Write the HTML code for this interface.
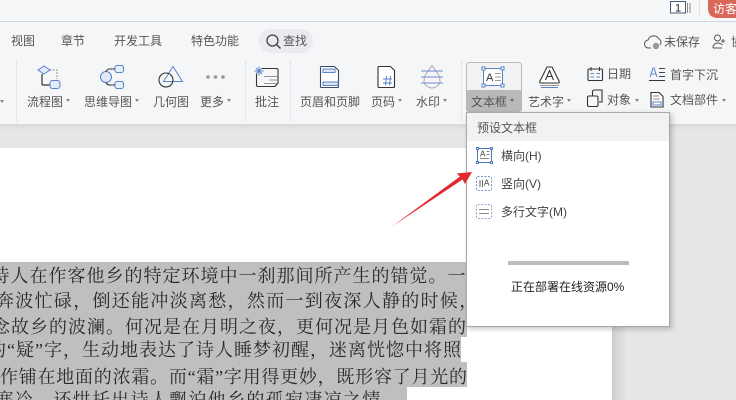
<!DOCTYPE html>
<html lang="zh-CN"><head><meta charset="utf-8">
<style>
html,body{margin:0;padding:0;width:736px;height:400px;overflow:hidden}
#w{width:736px;height:400px;position:relative;overflow:hidden;background:#e6e6e6;font-family:"Liberation Sans","Noto Sans CJK SC",sans-serif;font-size:12px;color:#555}
.a{position:absolute}
.t{position:absolute;white-space:nowrap;line-height:16px;height:16px}
.c{position:absolute;width:0;height:0;border-left:2.5px solid transparent;border-right:2.5px solid transparent;border-top:3px solid #888}
.sel{position:absolute;background:#bfbfbf;left:0}
.l{position:absolute;left:0;height:25px;line-height:25px;font-family:"Liberation Serif","Noto Serif CJK SC",serif;font-size:18px;color:#2a2a2a;white-space:nowrap}
.j{text-align:justify;text-align-last:justify}
svg{position:absolute;left:0;top:0}
svg text{font-family:"Liberation Sans",sans-serif}
</style></head><body><div id="w">
<div class="a" style="left:0;top:0;width:736px;height:21px;background:#f6f7f9"></div>
<div class="a" style="left:0;top:21px;width:736px;height:1px;background:#d2d5e2"></div>
<div class="a" style="left:0;top:22px;width:736px;height:102px;background:#f5f6f7"></div>
<div class="a" style="left:0;top:124px;width:736px;height:6px;background:linear-gradient(#d8d8d8,#e6e6e6)"></div>

<div class="a" style="left:0;top:148px;width:612px;height:252px;background:#fff"></div>
<div class="a" style="left:612px;top:148px;width:15px;height:252px;background:linear-gradient(90deg,#cfcfcf,#e6e6e6)"></div>

<div class="sel" style="top:262px;width:466px;height:25px"></div>
<div class="sel" style="top:287px;width:466px;height:25px"></div>
<div class="sel" style="top:312px;width:467px;height:25px"></div>
<div class="sel" style="top:337px;width:461px;height:25px"></div>
<div class="sel" style="top:362px;width:467px;height:25px"></div>
<div class="sel" style="top:387px;width:407px;height:13px"></div>
<div class="l" style="top:264px;left:-8.500px;letter-spacing:1px">诗人在作客他乡的特定环境中一刹那间所产生的错觉。一</div>
<div class="l" style="top:289px;left:-4px;letter-spacing:1.300px">奔波忙碌，倒还能冲淡离愁，然而一到夜深人静的时候，</div>
<div class="l" style="top:315px;left:-8px;letter-spacing:1px">念故乡的波澜。何况是在月明之夜，更何况是月色如霜的</div>
<div class="l j" style="top:338px;left:-12px;width:473px">的“疑”字，生动地表达了诗人睡梦初醒，迷离恍惚中将照</div>
<div class="l j" style="top:365px;left:0;width:467px">作铺在地面的浓霜。而“霜”字用得更妙，既形容了月光的</div>
<div class="l" style="top:388px;left:-4.500px;letter-spacing:1.300px">寒冷，还烘托出诗人飘泊他乡的孤寂凄凉之情。</div>

<svg width="736" height="400" style="z-index:1" fill="none">
<rect x="670.500" y="1.500" width="15" height="11.500" stroke="#4a5a78" fill="#fff"/>
<text x="678" y="11.500" font-size="11" fill="#222" text-anchor="middle">1</text>
<path d="M687.500 3v10M690 3v10" stroke="#888"/>
<path d="M699.500 0v17" stroke="#e2e2e2"/>
<path d="M708 0h28v18h-18q-10 0-10-10z" fill="#d9675a"/>
<!-- cloud -->
<path d="M651 48h-2a4 4 0 0 1-1-8 6 6 0 0 1 11-1 4 4 0 0 1 1 6" stroke="#555"/>
<circle cx="656" cy="46" r="3.200" fill="#9a9a9a"/>
<!-- person -->
<circle cx="717.500" cy="38" r="3" stroke="#555"/>
<path d="M713 48c0-3 2-5 4.500-5s4 1 5 2M713 48h9M721 41h4M723 39v4" stroke="#555"/>
<!-- search -->
<rect x="259" y="29" width="54" height="24" rx="12" fill="#e9ebee"/>
<circle cx="272.500" cy="40.500" r="5.500" stroke="#444" stroke-width="1.300"/>
<path d="M276.500 44.500l4 4" stroke="#444" stroke-width="1.500"/>
<!-- separators -->
<path d="M16.500 60v62M245.500 60v62M290.500 60v62M461.500 60v62" stroke="#e4e5e8"/>
<!-- flowchart -->
<path d="M38 70l6-4 6 4-6 4z" stroke="#5b83c9" fill="#e3ebf8"/>
<path d="M50 70h7v9" stroke="#999" stroke-dasharray="2 1"/>
<path d="M42 74v10q0 1 1 1h7" stroke="#333" stroke-width="1.200"/>
<rect x="50" y="80.500" width="10" height="8" rx="2.500" stroke="#5b83c9" fill="#e3ebf8"/>
<!-- mind -->
<circle cx="106" cy="77" r="5.500" stroke="#5b83c9" fill="#dfe8f6"/>
<rect x="115" y="65.500" width="8.500" height="7" rx="2" stroke="#5b83c9" fill="#e9eff9"/>
<rect x="115" y="81.500" width="8.500" height="7" rx="2" stroke="#5b83c9" fill="#e9eff9"/>
<path d="M106 71.500q1-2.500 4-2.500h5M106 82.500q1 2.500 4 2.500h5" stroke="#333" stroke-width="1.100"/>
<!-- geometry -->
<path d="M173 66.500l9.500 15h-19z" stroke="#5b83c9"/>
<circle cx="166" cy="80" r="7" stroke="#333" stroke-width="1.100"/>
<!-- more -->
<circle cx="208" cy="77" r="1.800" fill="#999"/><circle cx="215.500" cy="77" r="1.800" fill="#999"/><circle cx="223" cy="77" r="1.800" fill="#999"/>
<!-- comment -->
<path d="M262 68.500h14.500q1.500 0 1.500 1.500V83l-3 3.500H258q-1.500 0-1.500-1.500V73" stroke="#333" stroke-width="1.100"/>
<path d="M264 76.500h13M269 80h8M264 83.500h13" stroke="#999"/>
<path d="M259 66.500v9M254.500 71h9M256 68l6 6M262 68l-6 6" stroke="#5b83c9"/>
<!-- header footer -->
<path d="M321.500 66.500h13l4 4v16a1 1 0 0 1-1 1h-16a1 1 0 0 1-1-1v-19a1 1 0 0 1 1-1z" stroke="#3c4a63" stroke-width="1.100" fill="#fff"/>
<rect x="323" y="69" width="12" height="3.500" stroke="#5b83c9" fill="#dbe5f5"/>
<rect x="323" y="82" width="15" height="3.500" stroke="#5b83c9" fill="#dbe5f5"/>
<!-- page no -->
<path d="M379 66.500h11.500l4 4v16a1 1 0 0 1-1 1H379a1 1 0 0 1-1-1v-19a1 1 0 0 1 1-1z" stroke="#333" stroke-width="1.100" fill="#fff"/>
<path d="M383 79h9M383 83h9M386.500 76l-1 9.500M390.500 76l-1 9.500" stroke="#5b83c9"/>
<!-- watermark -->
<path d="M432 65.500c-3 5-8 9-8 15a8 7.500 0 0 0 16 0c0-6-5-10-8-15z" stroke="#aaa"/>
<path d="M421 71h22M421 77h22M421 83h22" stroke="#6c8fc8" stroke-width="1.100"/>
<!-- text box button -->
<rect x="466.500" y="62.500" width="55" height="49" rx="3" fill="#f2f2f2" stroke="#b9b9b9"/>
<path d="M466 90h56v19q0 3-3 3h-50q-3 0-3-3z" fill="#b9b9b9"/>
<rect x="483.500" y="68.500" width="19" height="17" stroke="#5b83c9" fill="#fff"/>
<g fill="#fff" stroke="#5b83c9"><rect x="482" y="67" width="3" height="3"/><rect x="501" y="67" width="3" height="3"/><rect x="482" y="84" width="3" height="3"/><rect x="501" y="84" width="3" height="3"/></g>
<text x="486" y="81" font-size="11" fill="#333">A</text>
<path d="M495 73.500h6M495 77h6M495 80.500h6" stroke="#999"/>
<!-- art -->
<path d="M547 67h5l7 14q1 2-1 2h-17q-2 0-1-2z" stroke="#333" stroke-width="1.100" fill="#fff"/>
<path d="M545.500 80l4-9.500 4 9.500M547 76.500h5" stroke="#333" stroke-width="1.100"/>
<path d="M540 85.500h19" stroke="#999"/><path d="M541 87.500h17" stroke="#5b83c9"/>
<!-- date -->
<rect x="588" y="69" width="14.500" height="11.500" rx="1" stroke="#333" stroke-width="1.100"/>
<path d="M591 67v4M599.500 67v4" stroke="#333"/>
<path d="M590.500 73.500h3.500M596.500 73.500h3.500M590.500 77h3.500M596.500 77h3.500" stroke="#5b83c9"/>
<!-- object -->
<path d="M592.500 96v-4q0-2 2-2h7.500v12h-3" stroke="#333" stroke-width="1.100"/>
<rect x="587.500" y="96" width="10.500" height="10.500" rx="1.500" stroke="#333" stroke-width="1.100" fill="#f5f6f7"/>
<!-- drop cap -->
<path d="M650 77l3-9h1l3 9M651 74h5" stroke="#5b83c9"/>
<path d="M659 68.500h6M659 72.500h6M659 76.500h6" stroke="#444"/><path d="M649 80.500h16" stroke="#333"/>
<!-- parts -->
<path d="M651 92.500h8l4 4v10.500h-12z" stroke="#333" stroke-width="1.100" fill="#fff"/>
<path d="M653 96h6M653 99h7" stroke="#888"/><rect x="653" y="102" width="8" height="3" stroke="#5b83c9"/>
</svg>

<div class="t" style="left:708px;top:1px;width:34px;text-align:center;color:#fff;z-index:2;font-size:12px">访客</div>

<div class="t" style="left:11px;top:33px">视图</div>
<div class="t" style="left:61px;top:33px">章节</div>
<div class="t" style="left:114px;top:33px">开发工具</div>
<div class="t" style="left:191px;top:33px">特色功能</div>
<div class="t" style="left:283px;top:33px;z-index:2">查找</div>
<div class="t" style="left:664px;top:34px">未保存</div>
<div class="t" style="left:731px;top:34px">协</div>

<div class="c" style="left:0;top:100px"></div>
<div class="t" style="left:27px;top:94px">流程图</div><div class="c" style="left:66px;top:99px"></div>
<div class="t" style="left:84px;top:94px">思维导图</div><div class="c" style="left:135px;top:99px"></div>
<div class="t" style="left:153px;top:94px">几何图</div>
<div class="t" style="left:200px;top:94px">更多</div><div class="c" style="left:227px;top:99px"></div>
<div class="t" style="left:255px;top:94px">批注</div>
<div class="t" style="left:300px;top:94px">页眉和页脚</div>
<div class="t" style="left:371px;top:94px">页码</div><div class="c" style="left:398px;top:99px"></div>
<div class="t" style="left:416px;top:94px">水印</div><div class="c" style="left:443px;top:99px"></div>
<div class="t" style="left:471px;top:94px;z-index:2">文本框</div><div class="c" style="left:510px;top:99px;z-index:2;border-top-color:#666"></div>
<div class="t" style="left:528px;top:94px">艺术字</div><div class="c" style="left:567px;top:99px"></div>
<div class="t" style="left:607px;top:66px">日期</div>
<div class="t" style="left:670px;top:67px">首字下沉</div>
<div class="t" style="left:607px;top:92px">对象</div><div class="c" style="left:635px;top:99px"></div>
<div class="t" style="left:670px;top:92px">文档部件</div><div class="c" style="left:722px;top:99px"></div>

<!-- dropdown -->
<div class="a" style="left:466px;top:112px;width:202px;height:213px;background:#fff;border:1px solid #a9a9a9;box-shadow:2px 2px 5px rgba(0,0,0,.22);z-index:3">
 <div class="a" style="left:0;top:0;width:202px;height:28px;background:#f1f2f4"></div>
 <div class="t" style="left:10px;top:7px;color:#555">预设文本框</div>
 <div class="t" style="left:34px;top:35px;color:#444">横向(H)</div>
 <div class="t" style="left:34px;top:63px;color:#444">竖向(V)</div>
 <div class="t" style="left:34px;top:91px;color:#444">多行文字(M)</div>
 <div class="a" style="left:41px;top:148px;width:121px;height:4px;background:#bdbdbd"></div>
 <div class="t" style="left:44px;top:166px;color:#222">正在部署在线资源0%</div>
</div>

<svg width="736" height="400" style="z-index:4" fill="none">
<rect x="477.500" y="148.500" width="14" height="14" stroke="#4f78c4"/>
<g fill="#fff" stroke="#4f78c4"><rect x="476.500" y="147.500" width="2" height="2"/><rect x="490.500" y="147.500" width="2" height="2"/><rect x="476.500" y="161.500" width="2" height="2"/><rect x="490.500" y="161.500" width="2" height="2"/></g>
<text x="480" y="156.500" font-size="8" fill="#333">A</text>
<path d="M486.500 151.500h3M486.500 154.500h3M480 158.500h9" stroke="#888"/>
<rect x="476.500" y="176.500" width="15" height="14" rx="1" stroke="#6f90cf" stroke-dasharray="2 1.500"/>
<path d="M480 180v7M482.500 180v7" stroke="#666"/><text x="484" y="185.500" font-size="8" fill="#333">A</text>
<rect x="476.500" y="204.500" width="15" height="14" rx="1" stroke="#8aa4d6" stroke-dasharray="2 1.500"/>
<path d="M479 209.500h10M479 213.500h10" stroke="#888"/>
<!-- arrow -->
<path d="M392 226.500L460 176.500L456.500 173.500L472 172L465 184L462.500 179.500Z" fill="#e0282e"/>
</svg>
</div></body></html>
